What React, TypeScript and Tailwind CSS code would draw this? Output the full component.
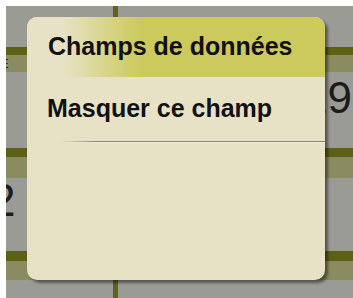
import React from 'react'

const GRAY = 'bg-[#9b9b96]'

function GrayRow({ h, children }: { h: string; children?: React.ReactNode }) {
  return (
    <div className={`flex ${h}`}>
      <div className={`w-[107px] ${GRAY} overflow-hidden flex items-start`}>{children}</div>
      <div className="w-[5px] bg-[#5f6418]" />
      <div className={`flex-1 ${GRAY}`} />
    </div>
  )
}

export default function App() {
  return (
    <div className="relative w-[353px] h-[298px] overflow-hidden bg-white font-['Liberation_Sans',Arial,sans-serif]">
      {/* Table in the background */}
      <div className="ml-[6px] mt-[6px] flex flex-col">
        <GrayRow h="h-[41px]" />
        <div className="h-[8px] bg-[#5c6114]" />
        <div className="h-[17px] bg-[#8a8b60] flex items-center overflow-hidden">
          <span className="ml-[-6px] text-[13px] leading-none text-[#222]">E</span>
        </div>
        <div className={`h-[76px] ${GRAY} flex items-start justify-end overflow-hidden pt-[4px]`}>
          <span className="mr-[1px] text-[44px] leading-none text-[#1c1c1c]">29</span>
        </div>
        <div className="h-[9px] bg-[#5c6114]" />
        <div className="h-[21px] bg-[#8a8b60]" />
        <GrayRow h="h-[73px]">
          <span className="ml-[-16px] mt-[-1px] text-[46px] leading-none text-[#1c1c1c]">2</span>
        </GrayRow>
        <div className="h-[10px] bg-[#5c6114]" />
        <div className="h-[19px] bg-[#8a8b60]" />
        <GrayRow h="h-[30px]" />
      </div>

      {/* Context menu */}
      <div className="absolute left-[27px] top-[17px] w-[298px] h-[263px] rounded-[10px] overflow-hidden bg-[#e7e2c5] shadow-[3px_3px_3px_rgba(0,0,0,0.45)]">
        <div className="h-[60px] flex items-center pl-[21px] bg-[linear-gradient(to_right,#e7e2c5_36px,#ccca5c_113px)]">
          <span className="text-[25px] font-bold text-[#111]">Champs de données</span>
        </div>
        <div className="h-[64px] flex items-center pl-[20px]">
          <span className="text-[25px] font-bold text-[#111]">Masquer ce champ</span>
        </div>
        <div className="h-[1px] bg-[linear-gradient(to_right,transparent_33px,#85847a_70px)]" />
        <div className="h-[1px] bg-[linear-gradient(to_right,transparent_33px,#f2eedb_70px)]" />
      </div>
    </div>
  )
}
